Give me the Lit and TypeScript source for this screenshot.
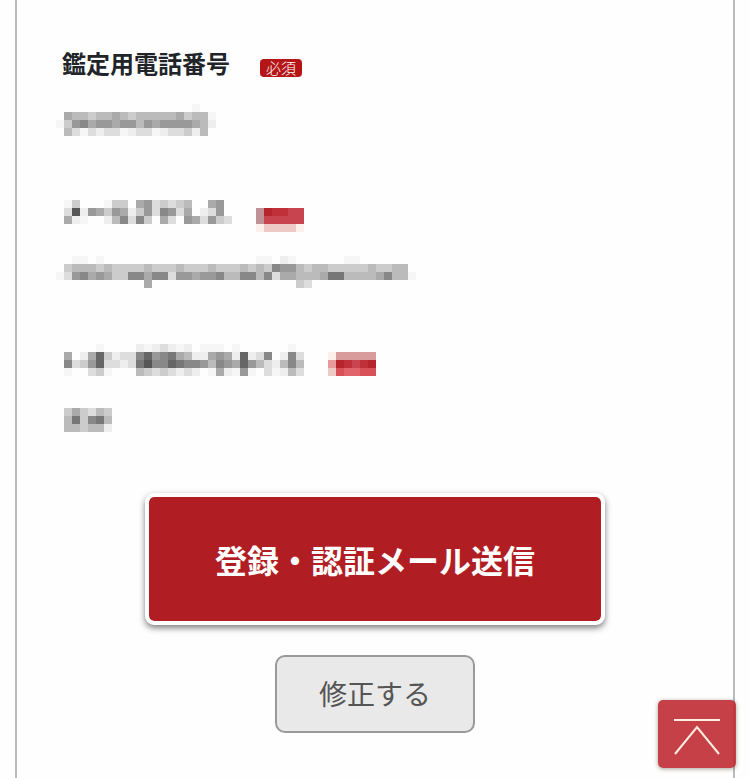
import { LitElement, html, svg, css } from "lit";
import { customElement, property } from "lit/decorators.js";

const CELL = 8;

// Reds used by the covered badges; hex digits are plain greys.
const REDS: Record<string, string> = {
  p: "#fdf0ea",
  q: "#eecac6",
  r: "#b7252c",
  s: "#bf3038",
  t: "#c8444e",
  u: "#c09296",
  v: "#d89c9c",
  w: "#e69a9c",
  x: "#d85058",
  y: "#e0646a",
  z: "#f6f6f6",
};

const colour = (c: string) => REDS[c] ?? `#${c}${c}${c}`;

/** Pixelated cover over private data: one character for each cell. */
@customElement("mosaic-cover")
export class MosaicCover extends LitElement {
  @property({ attribute: false }) rows: string[] = [];

  static styles = css`
    :host {
      display: block;
      margin-left: -6px;
    }
    .cells {
      display: block;
    }
  `;

  render() {
    const w = Math.max(...this.rows.map((r) => r.length)) * CELL;
    const h = this.rows.length * CELL;
    return html`<svg class="cells" width=${w} height=${h} viewBox="0 0 ${w} ${h}" shape-rendering="crispEdges" aria-hidden="true">
      ${this.rows.map((row, y) =>
        [...row].map((c, x) =>
          c === "."
            ? null
            : svg`<rect x=${x * CELL} y=${y * CELL} width=${CELL} height=${CELL} fill=${colour(c)}></rect>`
        )
      )}
    </svg>`;
  }
}

interface Field {
  label?: string;
  cover?: string[];
  value: string[];
}

const FIELDS: Field[] = [
  {
    label: "鑑定用電話番号",
    value: [
      ".................z..",
      ".abbcbbabcbbbbbacbbz",
      "zc98a99a99b9a9999abe",
      ".bdzdeddzeddzeddceb.",
      "",
    ],
  },
  {
    cover: [
      "",
      ".zc...zcc.a9dcdcb..a9",
      ".d5e9ac9aec9d89da.ed9....ursstt",
      ".aez..eb8d8c.ad.9ad9cd...uttttt",
      ".........................pqqqqp",
    ],
    value: [
      "..zz.z...................zz.ez......zz......",
      ".cbbbcbccccbcccbcccbcccbcbc899bcbbcccccbccbb",
      "zd98a9acc88a88d99a998bb88b8daabbba77bbbba8bbz",
      "...........a..................cd............",
    ],
  },
  {
    cover: [
      ".....z....ezedeze.zzz.z......z..",
      ".a.ea6cedd86987abeea9ae6ed8.e8d...pvvvvv",
      ".8dc96dded758867889b89a69bdeb8b...wrstsr",
      ".z..dcz...bcdcdede.zaez9z.dzebd...qxyyxx",
    ],
    value: ["", ".cacdbc", ".b7c87b", ".bbcbbe", ""],
  },
];

@customElement("app-root")
export class AppRoot extends LitElement {
  static styles = css`
    :host {
      display: block;
      min-height: 100vh;
      background: #fefefe;
      color: #212529;
      font-family: "Noto Sans CJK JP", "Noto Sans", sans-serif;
    }
    * {
      box-sizing: border-box;
    }
    .card {
      min-height: 100vh;
      margin: 0 15px;
      padding: 44px 45px;
      border: solid #b9bbbd;
      border-width: 0 2px;
    }
    .fields {
      display: flex;
      flex-direction: column;
      gap: 48px;
    }
    .field {
      display: flex;
      flex-direction: column;
      gap: 20px;
    }
    .title,
    .value {
      display: flex;
      align-items: center;
      height: 40px;
    }
    .title {
      gap: 30px;
      margin: 0;
      font-size: 24px;
      line-height: 38px;
      font-weight: 700;
    }
    .label {
      padding-bottom: 2px;
    }
    .badge {
      margin-top: 8px;
      padding: 0 6px;
      border-radius: 4px;
      background: #b51517;
      color: #fff;
      font-size: 15px;
      line-height: 18px;
      font-weight: 300;
    }
    .actions {
      display: flex;
      flex-direction: column;
      align-items: center;
      gap: 30px;
      margin-top: 53px;
    }
    button {
      padding: 0;
      font-family: inherit;
      cursor: pointer;
    }
    .send {
      width: 460px;
      max-width: 100%;
      height: 132px;
      border: 4px solid #fff;
      border-radius: 9px;
      background: #b01e23 padding-box;
      box-shadow: 0 3px 6px rgba(0, 0, 0, 0.5);
      color: #fff;
      font-size: 32px;
      font-weight: 700;
    }
    .edit {
      width: 200px;
      height: 78px;
      padding-bottom: 2px;
      border: 2px solid #999;
      border-radius: 10px;
      background: #e9e9e9;
      color: #555;
      font-size: 28px;
      font-weight: 400;
    }
    .top {
      position: fixed;
      right: 14px;
      bottom: 10px;
      display: grid;
      place-items: center;
      width: 78px;
      height: 68px;
      border-radius: 5px;
      background: rgba(190, 38, 46, 0.88);
      box-shadow: 0 1px 4px rgba(60, 50, 20, 0.45);
    }
  `;

  render() {
    return html`
      <main class="card">
        <div class="fields">
          ${FIELDS.map(
            (f) => html`<section class="field">
              <h2 class="title">
                ${f.label
                  ? html`<span class="label">${f.label}</span><span class="badge">必須</span>`
                  : html`<mosaic-cover .rows=${f.cover ?? []}></mosaic-cover>`}
              </h2>
              <div class="value"><mosaic-cover .rows=${f.value}></mosaic-cover></div>
            </section>`
          )}
        </div>
        <div class="actions">
          <button class="send" type="submit">登録・認証メール送信</button>
          <button class="edit" type="button">修正する</button>
        </div>
      </main>
      <a class="top" href="#" aria-label="↑">
        <svg width="78" height="68" viewBox="0 0 78 68" fill="none" stroke="#fdeee0" stroke-width="2" aria-hidden="true">
          <path d="M16 20H62M17 54L39 27L61 54" />
        </svg>
      </a>
    `;
  }
}
